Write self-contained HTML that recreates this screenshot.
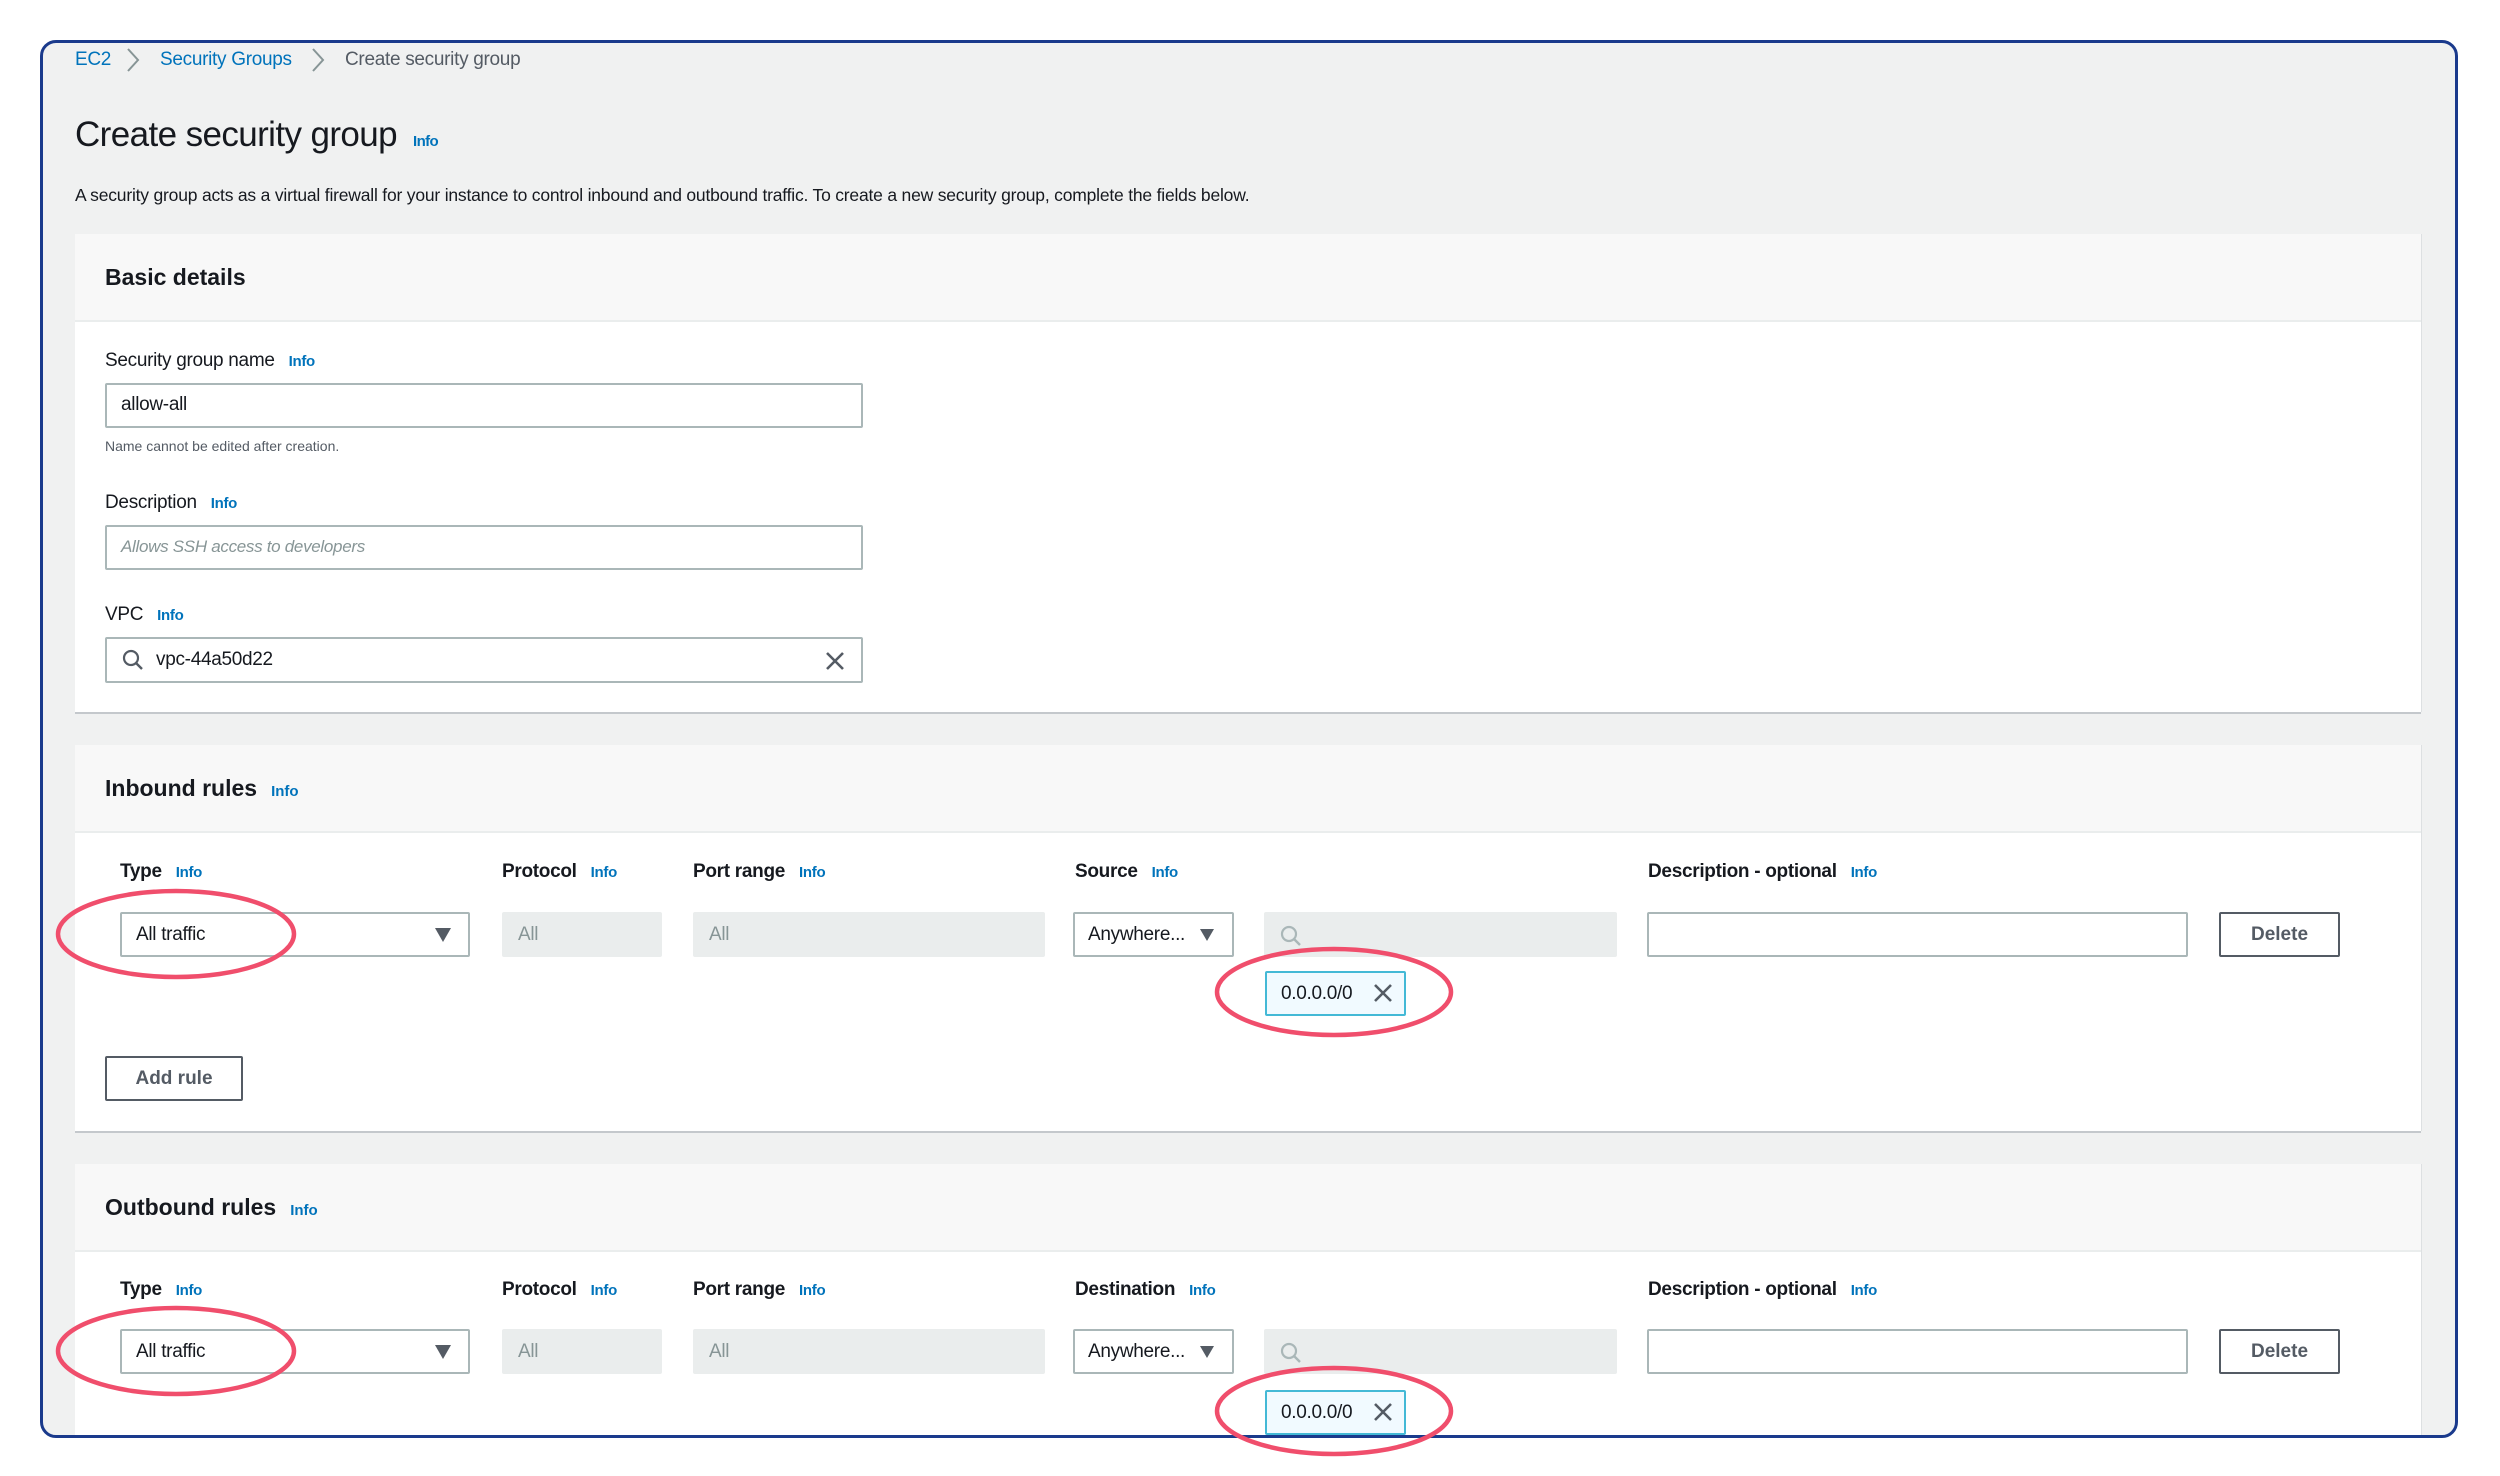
<!DOCTYPE html>
<html><head><meta charset="utf-8"><style>
*{box-sizing:border-box;margin:0;padding:0}
body{width:2500px;height:1476px;background:#fff;position:relative;overflow:hidden;font-family:"Liberation Sans",sans-serif;color:#16191f}
.a{position:absolute;white-space:nowrap}
.frame{position:absolute;left:40px;top:40px;width:2418px;height:1398px;border-radius:16px;background:#f0f1f1}
.frameb{position:absolute;left:40px;top:40px;width:2418px;height:1398px;border:3px solid #1a3a8c;border-radius:16px}
.card{position:absolute;background:#fff;box-shadow:0 2px 0 #c4c8cc,1px 0 0 #dde0e2}
.hdr{position:absolute;left:0;top:0;right:0;background:#f8f8f8;border-bottom:2px solid #eaeded}
.info{color:#0073bb;font-weight:bold;font-size:15px;margin-left:14px}
.lbl{font-size:19px;letter-spacing:-0.3px}
.b{font-weight:bold}
.inp{position:absolute;background:#fff;border:2px solid #aab7b8;border-radius:2px}
.dis{position:absolute;background:#eaeded;border-radius:2px}
.t{position:absolute;font-size:19px;letter-spacing:-0.3px}
.btn{position:absolute;background:#fff;border:2px solid #545b64;border-radius:2px;font-weight:bold;font-size:19px;color:#545b64;text-align:center}
.chip{position:absolute;background:#f1faff;border:2px solid #44b9d6;border-radius:2px}
</style></head><body>
<div class="frame"></div>

<!-- breadcrumb -->
<div class="a" style="left:75px;top:49px;font-size:19px;color:#0073bb;letter-spacing:-0.3px">EC2</div>
<svg class="a" style="left:125px;top:47px" width="16" height="26"><path d="M3 2 L13 13 L3 24" fill="none" stroke="#879596" stroke-width="2"/></svg>
<div class="a" style="left:160px;top:49px;font-size:19px;color:#0073bb;letter-spacing:-0.3px">Security Groups</div>
<svg class="a" style="left:310px;top:47px" width="16" height="26"><path d="M3 2 L13 13 L3 24" fill="none" stroke="#879596" stroke-width="2"/></svg>
<div class="a" style="left:345px;top:49px;font-size:19px;color:#545b64;letter-spacing:-0.3px">Create security group</div>

<div class="a" style="left:75px;top:115px;font-size:35px;letter-spacing:-0.6px">Create security group<span class="info" style="margin-left:16px">Info</span></div>
<div class="a" style="left:75px;top:185px;font-size:17.5px;color:#16191f;letter-spacing:-0.2px">A security group acts as a virtual firewall for your instance to control inbound and outbound traffic. To create a new security group, complete the fields below.</div>

<!-- Basic details -->
<div class="card" style="left:75px;top:234px;width:2346px;height:478px">
  <div class="hdr" style="height:88px"></div>
</div>
<div class="a b" style="left:105px;top:264px;font-size:23px">Basic details</div>
<div class="a lbl" style="left:105px;top:350px">Security group name<span class="info">Info</span></div>
<div class="inp" style="left:105px;top:383px;width:758px;height:45px"></div>
<div class="t" style="left:121px;top:394px">allow-all</div>
<div class="a" style="left:105px;top:438px;font-size:14px;color:#545b64">Name cannot be edited after creation.</div>
<div class="a lbl" style="left:105px;top:492px">Description<span class="info">Info</span></div>
<div class="inp" style="left:105px;top:525px;width:758px;height:45px"></div>
<div class="t" style="left:121px;top:537px;font-style:italic;color:#879596;font-size:17px">Allows SSH access to developers</div>
<div class="a lbl" style="left:105px;top:604px">VPC<span class="info">Info</span></div>
<div class="inp" style="left:105px;top:637px;width:758px;height:46px"></div>
<svg class="a" style="left:121px;top:648px" width="24" height="24"><circle cx="10" cy="10" r="7" fill="none" stroke="#545b64" stroke-width="2.2"/><path d="M15 15 L21 21" stroke="#545b64" stroke-width="2.4"/></svg>
<div class="t" style="left:156px;top:649px">vpc-44a50d22</div>
<svg class="a" style="left:824px;top:650px" width="22" height="22"><path d="M3 3 L19 19 M19 3 L3 19" stroke="#545b64" stroke-width="2.6"/></svg>

<!-- Inbound -->
<div class="card" style="left:75px;top:745px;width:2346px;height:386px">
  <div class="hdr" style="height:88px"></div>
</div>
<div class="a b" style="left:105px;top:775px;font-size:23px">Inbound rules<span class="info">Info</span></div>

<!-- Outbound -->
<div class="card" style="left:75px;top:1164px;width:2346px;height:274px;box-shadow:1px 0 0 #dde0e2">
  <div class="hdr" style="height:88px"></div>
</div>
<div class="a b" style="left:105px;top:1194px;font-size:23px">Outbound rules<span class="info">Info</span></div>

<div class="btn" style="left:105px;top:1056px;width:138px;height:45px;line-height:41px">Add rule</div>

<div class="frameb"></div>

<!-- rows -->
<div id="rows"></div>
<script>
function row(ly, ry, cy, src){
 var h='';
 h+='<div class="a lbl b" style="left:120px;top:'+(ly-11)+'px">Type<span class="info">Info</span></div>';
 h+='<div class="a lbl b" style="left:502px;top:'+(ly-11)+'px">Protocol<span class="info">Info</span></div>';
 h+='<div class="a lbl b" style="left:693px;top:'+(ly-11)+'px">Port range<span class="info">Info</span></div>';
 h+='<div class="a lbl b" style="left:1075px;top:'+(ly-11)+'px">'+src+'<span class="info">Info</span></div>';
 h+='<div class="a lbl b" style="left:1648px;top:'+(ly-11)+'px">Description - optional<span class="info">Info</span></div>';
 h+='<div class="inp" style="left:120px;top:'+ry+'px;width:350px;height:45px"></div>';
 h+='<div class="t" style="left:136px;top:'+(ry+12)+'px">All traffic</div>';
 h+='<svg class="a" style="left:434px;top:'+(ry+15)+'px" width="18" height="16"><path d="M1 1 L17 1 L9 15 Z" fill="#545b64"/></svg>';
 h+='<div class="dis" style="left:502px;top:'+ry+'px;width:160px;height:45px"></div>';
 h+='<div class="t" style="left:518px;top:'+(ry+12)+'px;color:#879596">All</div>';
 h+='<div class="dis" style="left:693px;top:'+ry+'px;width:352px;height:45px"></div>';
 h+='<div class="t" style="left:709px;top:'+(ry+12)+'px;color:#879596">All</div>';
 h+='<div class="inp" style="left:1073px;top:'+ry+'px;width:161px;height:45px"></div>';
 h+='<div class="t" style="left:1088px;top:'+(ry+12)+'px">Anywhere...</div>';
 h+='<svg class="a" style="left:1199px;top:'+(ry+16)+'px" width="16" height="14"><path d="M1 1 L15 1 L8 13 Z" fill="#545b64"/></svg>';
 h+='<div class="dis" style="left:1264px;top:'+ry+'px;width:353px;height:45px"></div>';
 h+='<svg class="a" style="left:1279px;top:'+(ry+12)+'px" width="24" height="24"><circle cx="10" cy="10" r="7" fill="none" stroke="#aab7b8" stroke-width="2.2"/><path d="M15 15 L21 21" stroke="#aab7b8" stroke-width="2.4"/></svg>';
 h+='<div class="inp" style="left:1647px;top:'+ry+'px;width:541px;height:45px"></div>';
 h+='<div class="btn" style="left:2219px;top:'+ry+'px;width:121px;height:45px;line-height:41px">Delete</div>';
 h+='<div class="chip" style="left:1265px;top:'+cy+'px;width:141px;height:45px"></div>';
 h+='<div class="t" style="left:1281px;top:'+(cy+12)+'px">0.0.0.0/0</div>';
 h+='<svg class="a" style="left:1373px;top:'+(cy+12)+'px" width="20" height="20"><path d="M2 2 L18 18 M18 2 L2 18" stroke="#545b64" stroke-width="2.6"/></svg>';
 h+='<svg class="a" style="left:0;top:0;overflow:visible" width="1" height="1"><ellipse cx="176" cy="'+(ry+22)+'" rx="118" ry="43" fill="none" stroke="#f04e6c" stroke-width="4.5"/><ellipse cx="1334" cy="'+(cy+21)+'" rx="117" ry="43" fill="none" stroke="#f04e6c" stroke-width="4.5"/></svg>';
 return h;
}
document.getElementById('rows').innerHTML=row(872,912,971,'Source')+row(1290,1329,1390,'Destination');
</script>
</body></html>
